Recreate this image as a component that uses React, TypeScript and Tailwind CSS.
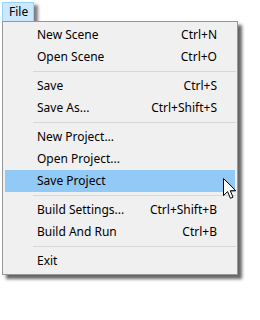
type Entry = { label: string; shortcut?: string; active?: boolean } | 'sep';

const entries: Entry[] = [
  { label: 'New Scene', shortcut: 'Ctrl+N' },
  { label: 'Open Scene', shortcut: 'Ctrl+O' },
  'sep',
  { label: 'Save', shortcut: 'Ctrl+S' },
  { label: 'Save As...', shortcut: 'Ctrl+Shift+S' },
  'sep',
  { label: 'New Project...' },
  { label: 'Open Project...' },
  { label: 'Save Project', active: true },
  'sep',
  { label: 'Build Settings...', shortcut: 'Ctrl+Shift+B' },
  { label: 'Build And Run', shortcut: 'Ctrl+B' },
  'sep',
  { label: 'Exit' },
];

function Cursor() {
  return (
    <svg className="absolute left-[223px] top-[178px]" width="14" height="22" viewBox="0 0 14 22">
      <path
        d="M0.5 0.5 L0.5 17.5 L4.6 13.6 L7.4 20.3 L10 19.2 L7.3 12.7 L12.8 12.7 Z"
        fill="#fff"
        stroke="#000"
        strokeWidth={1}
      />
    </svg>
  );
}

export default function App() {
  return (
    <div className="relative w-[260px] h-[320px] bg-white font-['Segoe_UI','Noto_Sans',sans-serif] text-[12px] text-black">
      <div className="flex flex-col items-start pl-[2px] pt-[2px]">
        {/* File menu title */}
        <div className="h-[20px] w-[32px] flex items-center pl-[6px] bg-[#cce8ff] border border-[#99d1ff] leading-none shadow-[4px_3px_3px_rgba(0,0,0,0.5)]">
          File
        </div>

        {/* Dropdown */}
        <div className="relative -mt-px w-[236px] bg-[#f0f0f0] border border-[#979797] py-[2px] shadow-[4px_4px_3px_rgba(0,0,0,0.6)]">
          {entries.map((e, i) =>
            e === 'sep' ? (
              <div key={i} className="h-[7px] flex items-center pl-[30px] pr-px">
                <div className="h-px w-full bg-[#d7d7d7]" />
              </div>
            ) : (
              <div
                key={i}
                className={`h-[22px] mx-[2px] flex items-center justify-between pl-[32px] pr-[18px] ${
                  e.active ? 'bg-[#91c9f7]' : ''
                }`}
              >
                <span>{e.label}</span>
                {e.shortcut && <span>{e.shortcut}</span>}
              </div>
            )
          )}
        </div>
      </div>

      <Cursor />
    </div>
  );
}
